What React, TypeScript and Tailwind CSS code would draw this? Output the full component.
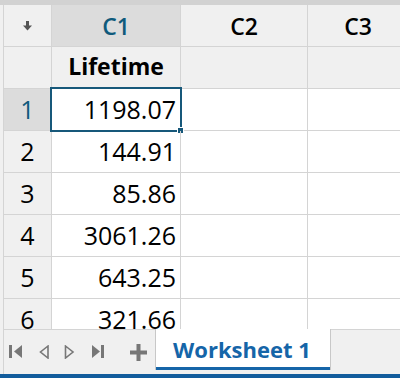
const rows = ['1198.07', '144.91', '85.86', '3061.26', '643.25', '321.66'];

const font = { fontFamily: '"Open Sans", "Noto Sans", sans-serif' };

function NavIcons() {
  return (
    <div className="flex items-center h-full pl-[2px]">
      {/* first */}
      <svg width="16" height="14" viewBox="0 0 16 14" className="ml-[3px]">
        <rect x="0" y="0" width="3" height="13" fill="#777" />
        <path d="M13 0 L5 6.5 L13 13 Z" fill="#777" />
      </svg>
      {/* prev */}
      <svg width="11" height="14" viewBox="0 0 11 14" className="ml-[14px]">
        <path d="M9 1 L1.5 7 L9 13 Z" fill="none" stroke="#777" strokeWidth="1.6" />
      </svg>
      {/* next */}
      <svg width="11" height="14" viewBox="0 0 11 14" className="ml-[14px]">
        <path d="M1.5 1 L9 7 L1.5 13 Z" fill="none" stroke="#777" strokeWidth="1.6" />
      </svg>
      {/* last */}
      <svg width="14" height="14" viewBox="0 0 14 14" className="ml-[17px]">
        <path d="M0 0 L8 6.5 L0 13 Z" fill="#777" />
        <rect x="9" y="0" width="3" height="13" fill="#777" />
      </svg>
      {/* add */}
      <svg width="17" height="17" viewBox="0 0 17 17" className="ml-[24px]">
        <rect x="6.5" y="0" width="4" height="17" fill="#777" />
        <rect x="0" y="6.5" width="17" height="4" fill="#777" />
      </svg>
    </div>
  );
}

export default function App() {
  return (
    <div className="w-[400px] h-[378px] bg-white overflow-hidden flex flex-col" style={font}>
      {/* top strip */}
      <div className="h-[5px] bg-[#d2d2d2] shrink-0" />

      {/* grid */}
      <div className="h-[324px] overflow-hidden pl-[3px] bg-[#f0f0f0] shrink-0">
        <div className="border-l border-[#d4d4d4] h-full grid grid-cols-[48px_129px_127px_1fr] auto-rows-[42px] bg-white">
          {/* header row */}
          <div className="bg-[#f0f0f0] border-r border-b border-[#d4d4d4] flex items-center justify-center">
            <svg width="9" height="10" viewBox="0 0 9 10">
              <rect x="3" y="0" width="3" height="5" fill="#555" />
              <path d="M0 4.5 L9 4.5 L4.5 9.5 Z" fill="#555" />
            </svg>
          </div>
          <div className="bg-[#dcdcdc] border-r border-b border-[#d4d4d4] flex items-center justify-center text-[23px] font-semibold text-[#0f5a7c] pt-[2px]">
            C1
          </div>
          <div className="bg-[#f0f0f0] border-r border-b border-[#d4d4d4] flex items-center justify-center text-[23px] font-semibold text-black pt-[2px]">
            C2
          </div>
          <div className="bg-[#f0f0f0] border-b border-[#d4d4d4] flex items-center justify-center text-[23px] font-semibold text-black pt-[2px] pl-[8px]">
            C3
          </div>

          {/* name row */}
          <div className="bg-[#f0f0f0] border-r border-b border-[#d4d4d4]" />
          <div className="bg-[#f0f0f0] border-r border-b border-[#d4d4d4] flex items-center justify-center text-[23px] font-bold text-black pb-[2px]">
            Lifetime
          </div>
          <div className="bg-[#f0f0f0] border-r border-b border-[#d4d4d4]" />
          <div className="bg-[#f0f0f0] border-b border-[#d4d4d4]" />

          {/* data rows */}
          {rows.map((v, i) => (
            <div key={v} className="contents">
              <div
                className={`border-r border-b border-[#d4d4d4] flex items-center justify-center text-[25px] font-medium ${
                  i === 0 ? 'bg-[#dcdcdc] text-[#0f5a7c]' : 'bg-[#f0f0f0] text-black'
                }`}
              >
                {i + 1}
              </div>
              <div className="relative border-r border-b border-[#d4d4d4] flex items-center justify-end pr-[4px] text-[25px] text-black">
                {v}
                {i === 0 && (
                  <>
                    <div className="absolute -left-[2px] -top-[2px] -right-[2px] -bottom-[2px] border-2 border-[#17587a]" />
                    <div className="absolute -right-[4px] -bottom-[4px] w-[5px] h-[5px] bg-[#17587a] border border-white box-content" />
                  </>
                )}
              </div>
              <div className="border-r border-b border-[#d4d4d4]" />
              <div className="border-b border-[#d4d4d4]" />
            </div>
          ))}
        </div>
      </div>

      {/* tab bar */}
      <div className="h-[45px] pl-[3px] bg-[#f0f0f0] shrink-0">
        <div className="h-full border-l border-t border-[#d4d4d4] flex">
          <div className="w-[151px] h-full">
            <NavIcons />
          </div>
          <div className="w-[176px] h-[41px] -mt-px bg-white border-l border-r border-[#c8c8c8] flex flex-col">
            <div className="flex-1 flex items-center pl-[17px] pt-[3px] text-[22px] font-bold text-[#1565a8]">
              Worksheet 1
            </div>
            <div className="h-[3px] bg-[#1565a8]" />
          </div>
        </div>
      </div>

      {/* bottom bar */}
      <div className="h-[4px] bg-[#125c9c] shrink-0" />
    </div>
  );
}
